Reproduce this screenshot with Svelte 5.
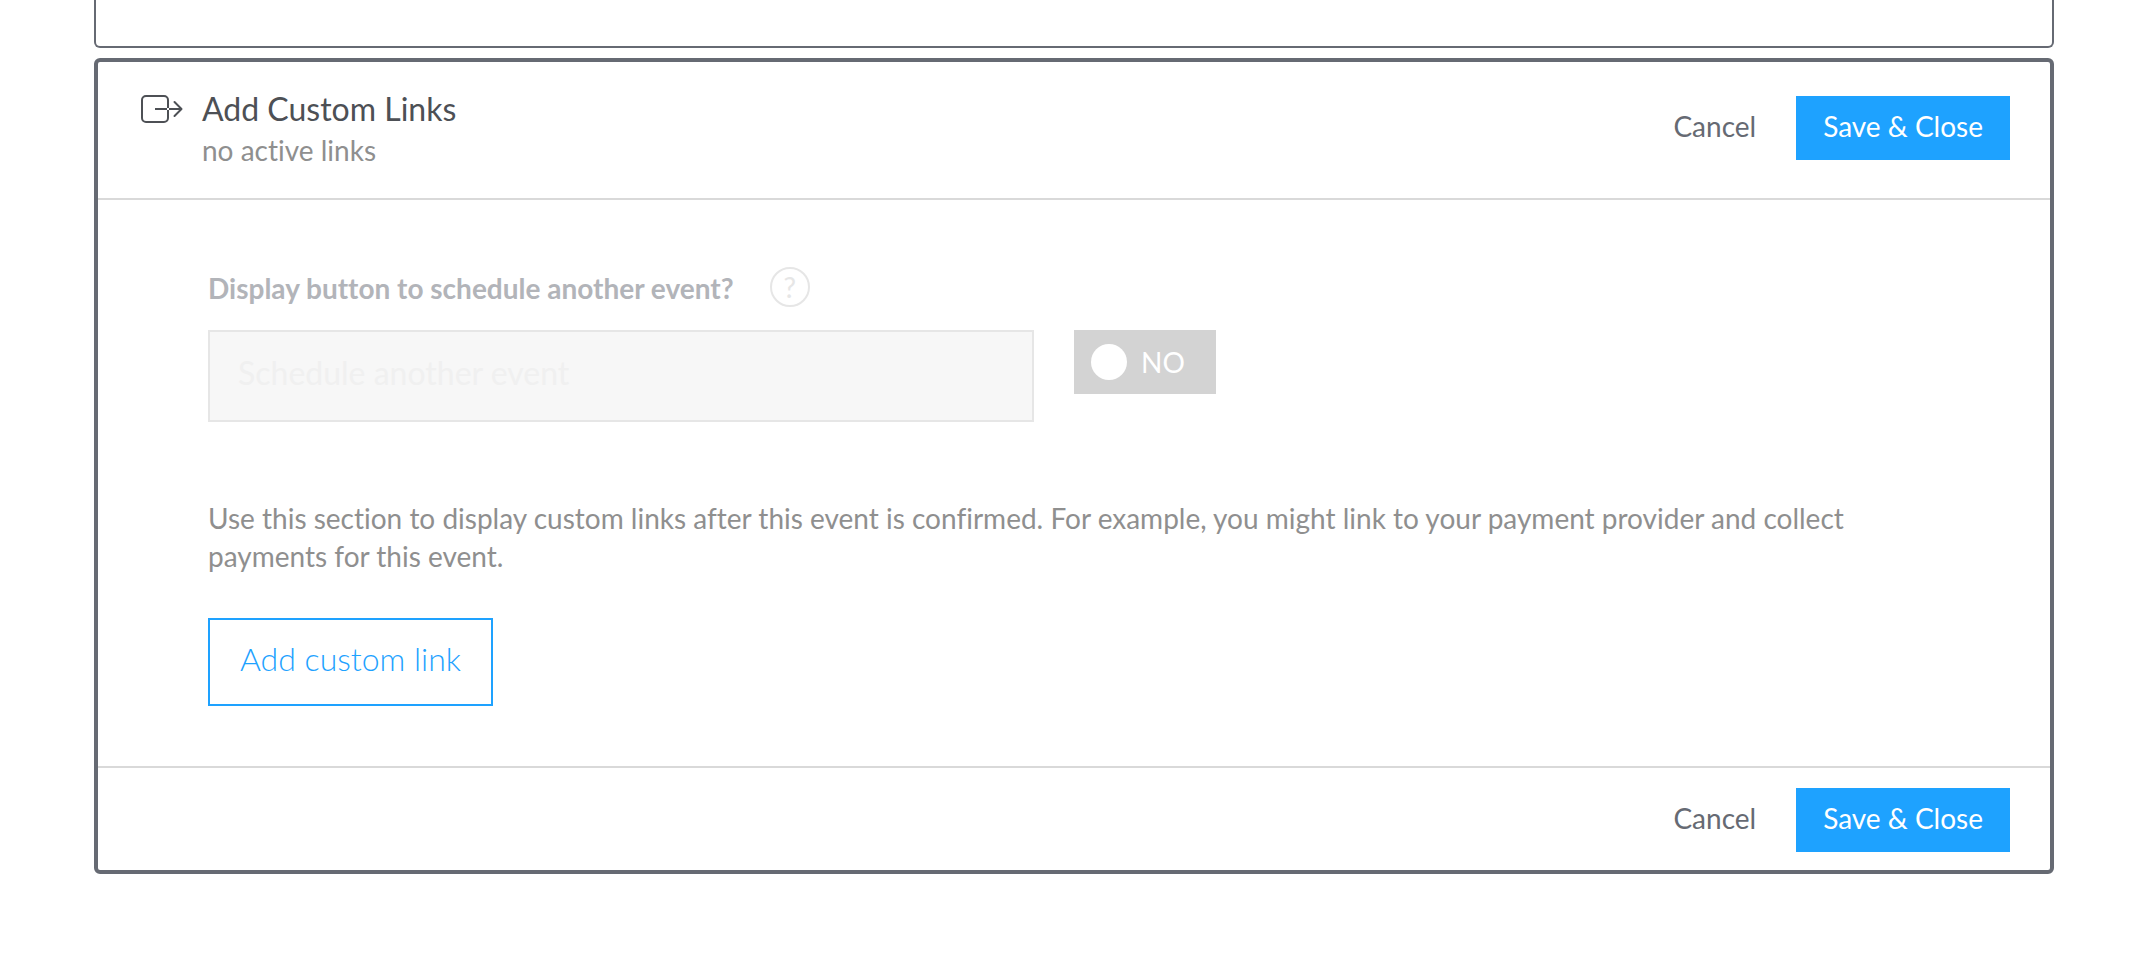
<script>
  let displayButton = $state(false);
</script>

{#snippet actions()}
  <div class="actions">
    <button type="button" class="cancel">Cancel</button>
    <button type="button" class="save">Save &amp; Close</button>
  </div>
{/snippet}

<main>
  <section class="previous" aria-hidden="true"></section>

  <section class="panel">
    <header>
      <svg class="icon" width="42" height="30" viewBox="0 0 42 30" fill="none" stroke="#4d5055" stroke-width="2" aria-hidden="true">
        <path d="M27 14V6A4 4 0 0 0 23 2H5A4 4 0 0 0 1 6V24A4 4 0 0 0 5 28H23A4 4 0 0 0 27 24V16" />
        <path d="M14 15H26M28 15H40" stroke-linecap="butt" />
        <path d="M33.5 8L40.5 15L33.5 22" stroke-linecap="round" stroke-linejoin="round" />
      </svg>
      <div class="heading">
        <h2>Add Custom Links</h2>
        <p>no active links</p>
      </div>
      {@render actions()}
    </header>

    <div class="body">
      <div class="label-row">
        <label for="button-text">Display button to schedule another event?</label>
        <button type="button" class="help">?</button>
      </div>
      <div class="field-row">
        <input id="button-text" class="text" type="text" placeholder="Schedule another event" disabled />
        <label class="toggle">
          <input type="checkbox" bind:checked={displayButton} />
          <span class="knob"></span>
          <span class="state">{displayButton ? 'YES' : 'NO'}</span>
        </label>
      </div>
      <p class="info">
        Use this section to display custom links after this event is confirmed. For example, you might link to your
        payment provider and collect payments for this event.
      </p>
      <button type="button" class="add">Add custom link</button>
    </div>

    <footer>{@render actions()}</footer>
  </section>
</main>

<style>
  :global(body) {
    background: #fff;
  }

  main {
    padding: 0 100px 60px 94px;
    font-family: Lato, 'Open Sans', sans-serif;
    font-size: 28px;
    line-height: 38px;
    font-variant-ligatures: none;
    color: #8f8f8f;
  }

  main :where(*) {
    box-sizing: border-box;
  }

  h2,
  p {
    margin: 0;
    font-weight: 400;
  }

  button,
  input {
    margin: 0;
    font: inherit;
    border-radius: 0;
  }

  button {
    cursor: pointer;
  }

  .previous {
    height: 48px;
    border: 2px solid #666a73;
    border-top: 0;
    border-radius: 0 0 6px 6px;
  }

  .panel {
    margin-top: 10px;
    border: 4px solid #666a73;
    border-radius: 6px;
  }

  header {
    display: flex;
    align-items: flex-start;
    padding: 27px 40px 29px 43px;
    border-bottom: 2px solid #d9d9d9;
  }

  .icon {
    flex: none;
    margin: 5px 19px 0 0;
  }

  .heading {
    flex: 1;
  }

  h2 {
    font-size: 32px;
    line-height: 40px;
    color: #4d5055;
  }

  .heading p {
    margin-top: 2px;
  }

  .actions {
    display: flex;
    gap: 40px;
  }

  header .actions {
    margin-top: 7px;
  }

  .cancel,
  .save {
    padding: 11px 0 15px;
    border: 0;
    background: none;
    color: #666a73;
  }

  .save {
    padding-inline: 27px;
    background: #1ea2ff;
    color: #fff;
  }

  .body {
    padding: 66px 110px 60px;
  }

  .label-row {
    display: flex;
    align-items: center;
    gap: 36px;
    height: 42px;
    margin-bottom: 22px;
    font-weight: 700;
    color: #b2b4b9;
  }

  .label-row label {
    padding-top: 2px;
  }

  .help {
    width: 40px;
    height: 40px;
    padding: 0;
    border: 2px solid #e6e6e6;
    border-radius: 50%;
    background: none;
    font-weight: 400;
    line-height: 36px;
    color: #e6e6e6;
  }

  .field-row {
    display: flex;
    align-items: flex-start;
    gap: 40px;
  }

  .text {
    flex: 0 1 826px;
    min-width: 0;
    height: 92px;
    padding: 0 28px 8px;
    border: 2px solid #e6e6e6;
    background: #f7f7f7;
    font-size: 32px;
    line-height: 40px;
  }

  .text::placeholder {
    color: #f0f0f0;
    opacity: 1;
  }

  .toggle {
    position: relative;
    display: flex;
    align-items: center;
    gap: 14px;
    width: 142px;
    height: 64px;
    padding: 0 17px;
    background: #d3d3d3;
    color: #fff;
    cursor: pointer;
  }

  .toggle input {
    position: absolute;
    inset: 0;
    opacity: 0;
  }

  .knob {
    width: 36px;
    height: 36px;
    border-radius: 50%;
    background: #fff;
  }

  .info {
    margin: 77px 0 43px;
  }

  .add {
    padding: 19px 30px 25px;
    border: 2px solid #1ea2ff;
    background: none;
    font-size: 32px;
    font-weight: 300;
    line-height: 40px;
    color: #1ea2ff;
  }

  footer {
    display: flex;
    justify-content: flex-end;
    padding: 20px 40px 18px;
    border-top: 2px solid #d9d9d9;
  }
</style>
